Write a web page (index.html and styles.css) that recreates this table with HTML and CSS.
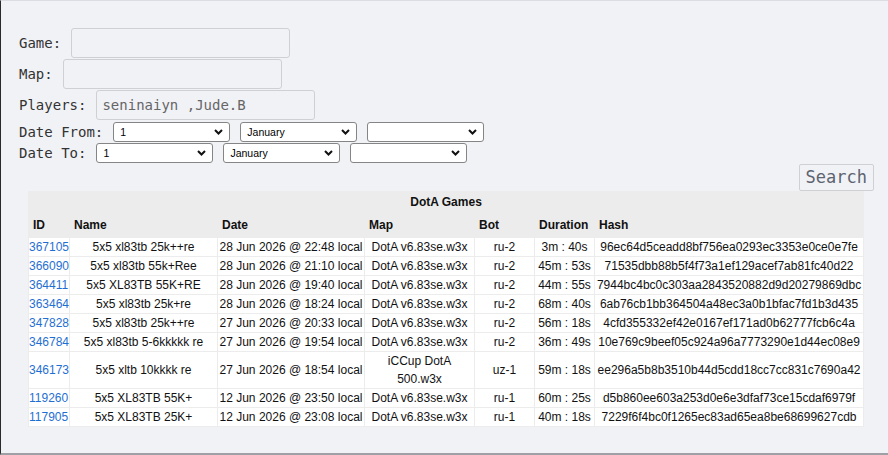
FILE: index.html
```html
<!DOCTYPE html>
<html>
<head>
<meta charset="utf-8">
<link rel="stylesheet" href="styles.css">
</head>
<body>
<div class="page">
  <form class="search-form">
    <div class="row">
      <label class="lbl">Game:</label>
      <input class="txt" type="text" value="">
    </div>
    <div class="row">
      <label class="lbl">Map:</label>
      <input class="txt" type="text" value="">
    </div>
    <div class="row">
      <label class="lbl">Players:</label>
      <input class="txt" type="text" value="seninaiyn ,Jude.B">
    </div>
    <div class="row date-row">
      <label class="lbl">Date From:</label>
      <select class="sel"><option>1</option></select>
      <select class="sel"><option>January</option></select>
      <select class="sel"><option></option></select>
    </div>
    <div class="row date-row">
      <label class="lbl">Date To:</label>
      <select class="sel"><option>1</option></select>
      <select class="sel"><option>January</option></select>
      <select class="sel"><option></option></select>
    </div>
    <div class="actions">
      <button class="btn" type="button">Search</button>
    </div>
  </form>

  <table class="games">
    <colgroup>
      <col class="c-id"><col class="c-name"><col class="c-date"><col class="c-map"><col class="c-bot"><col class="c-dur"><col class="c-hash">
    </colgroup>
    <thead>
      <tr><th class="caption" colspan="7">DotA Games</th></tr>
      <tr class="head">
        <th>ID</th><th>Name</th><th>Date</th><th>Map</th><th>Bot</th><th>Duration</th><th>Hash</th>
      </tr>
    </thead>
    <tbody>
      <tr><td class="id"><a href="#">367105</a></td><td>5x5 xl83tb 25k++re</td><td>28 Jun 2026 @ 22:48 local</td><td>DotA v6.83se.w3x</td><td>ru-2</td><td>3m : 40s</td><td>96ec64d5ceadd8bf756ea0293ec3353e0ce0e7fe</td></tr>
      <tr><td class="id"><a href="#">366090</a></td><td>5x5 xl83tb 55k+Ree</td><td>28 Jun 2026 @ 21:10 local</td><td>DotA v6.83se.w3x</td><td>ru-2</td><td>45m : 53s</td><td>71535dbb88b5f4f73a1ef129acef7ab81fc40d22</td></tr>
      <tr><td class="id"><a href="#">364411</a></td><td>5x5 XL83TB 55K+RE</td><td>28 Jun 2026 @ 19:40 local</td><td>DotA v6.83se.w3x</td><td>ru-2</td><td>44m : 55s</td><td>7944bc4bc0c303aa2843520882d9d20279869dbc</td></tr>
      <tr><td class="id"><a href="#">363464</a></td><td>5x5 xl83tb 25k+re</td><td>28 Jun 2026 @ 18:24 local</td><td>DotA v6.83se.w3x</td><td>ru-2</td><td>68m : 40s</td><td>6ab76cb1bb364504a48ec3a0b1bfac7fd1b3d435</td></tr>
      <tr><td class="id"><a href="#">347828</a></td><td>5x5 xl83tb 25k++re</td><td>27 Jun 2026 @ 20:33 local</td><td>DotA v6.83se.w3x</td><td>ru-2</td><td>56m : 18s</td><td>4cfd355332ef42e0167ef171ad0b62777fcb6c4a</td></tr>
      <tr><td class="id"><a href="#">346784</a></td><td>5x5 xl83tb 5-6kkkkk re</td><td>27 Jun 2026 @ 19:54 local</td><td>DotA v6.83se.w3x</td><td>ru-2</td><td>36m : 49s</td><td>10e769c9beef05c924a96a7773290e1d44ec08e9</td></tr>
      <tr><td class="id"><a href="#">346173</a></td><td>5x5 xltb 10kkkk re</td><td>27 Jun 2026 @ 18:54 local</td><td>iCCup DotA 500.w3x</td><td>uz-1</td><td>59m : 18s</td><td>ee296a5b8b3510b44d5cdd18cc7cc831c7690a42</td></tr>
      <tr><td class="id"><a href="#">119260</a></td><td>5x5 XL83TB 55K+</td><td>12 Jun 2026 @ 23:50 local</td><td>DotA v6.83se.w3x</td><td>ru-1</td><td>60m : 25s</td><td>d5b860ee603a253d0e6e3dfaf73ce15cdaf6979f</td></tr>
      <tr><td class="id"><a href="#">117905</a></td><td>5x5 XL83TB 25K+</td><td>12 Jun 2026 @ 23:08 local</td><td>DotA v6.83se.w3x</td><td>ru-1</td><td>40m : 18s</td><td>7229f6f4bc0f1265ec83ad65ea8be68699627cdb</td></tr>
    </tbody>
  </table>
</div>
</body>
</html>
```

FILE: styles.css
```css
html, body {
  margin: 0;
  padding: 0;
  height: 100%;
}

body {
  background: #f1f2f6;
  font-family: "DejaVu Sans Mono", monospace;
  color: #333;
}

.page {
  box-sizing: border-box;
  height: 455px;
  border-top: 1px solid #dcdde2;
  border-left: 1px solid #2a2a2a;
  border-bottom: 2px solid #9ea0a6;
  overflow: hidden;
}

.search-form {
  padding: 27px 14px 0 18px;
}

.row {
  display: flex;
  align-items: center;
  gap: 10px;
  height: 30px;
  margin-bottom: 1px;
}

.lbl {
  font-size: 14px;
  color: #333;
  white-space: pre;
}

.txt {
  box-sizing: border-box;
  width: 219px;
  height: 30px;
  margin: 0;
  padding: 0 5px;
  border: 1px solid #cfd0d4;
  border-radius: 3px;
  background: transparent;
  font-family: "DejaVu Sans Mono", monospace;
  font-size: 14px;
  color: #666;
}

.date-row {
  height: 21px;
  margin-bottom: 0;
}

.sel {
  box-sizing: border-box;
  width: 117px;
  height: 20px;
  margin: 0;
  padding: 0 18px 0 6px;
  border: 1px solid #858585;
  border-radius: 3px;
  background-color: #fff;
  background-image: url("data:image/svg+xml,%3Csvg xmlns='http://www.w3.org/2000/svg' width='9' height='6' viewBox='0 0 9 6'%3E%3Cpath d='M1 1 L4.5 4.5 L8 1' fill='none' stroke='%23111' stroke-width='2'/%3E%3C/svg%3E");
  background-repeat: no-repeat;
  background-position: right 6px center;
  -webkit-appearance: none;
  appearance: none;
  font-family: "Liberation Sans", Arial, sans-serif;
  font-size: 10.5px;
  color: #000;
}

.actions {
  display: flex;
  justify-content: flex-end;
  margin-top: 1px;
}

.btn {
  box-sizing: border-box;
  height: 27px;
  padding: 0 6px;
  border: 1px solid #cfd0d4;
  border-radius: 2px;
  background: #f1f2f6;
  font-family: "DejaVu Sans Mono", monospace;
  font-size: 17px;
  color: #5d6370;
  line-height: 25px;
}

.games {
  margin-left: 27px;
  width: 836px;
  table-layout: fixed;
  border-collapse: separate;
  border-spacing: 1px;
  background: #ececec;
  font-family: "Liberation Sans", Arial, sans-serif;
  font-size: 12px;
  color: #111;
}

.c-id { width: 40px; }
.c-name { width: 147px; }
.c-date { width: 146px; }
.c-map { width: 109px; }
.c-bot { width: 59px; }
.c-dur { width: 59px; }
.c-hash { width: 268px; }

.games th,
.games td {
  padding: 0;
}

.caption {
  height: 19px;
  line-height: 16px;
  text-align: center;
  font-weight: bold;
  vertical-align: middle;
}

.head th {
  height: 25px;
  text-align: left;
  text-indent: 4px;
  font-weight: bold;
  vertical-align: middle;
}

.games td {
  background: #fff;
  text-align: center;
  line-height: 18px;
  vertical-align: middle;
}

.games td.id {
  text-align: left;
}

.games a {
  color: #1f6fd3;
  text-decoration: none;
}
```
